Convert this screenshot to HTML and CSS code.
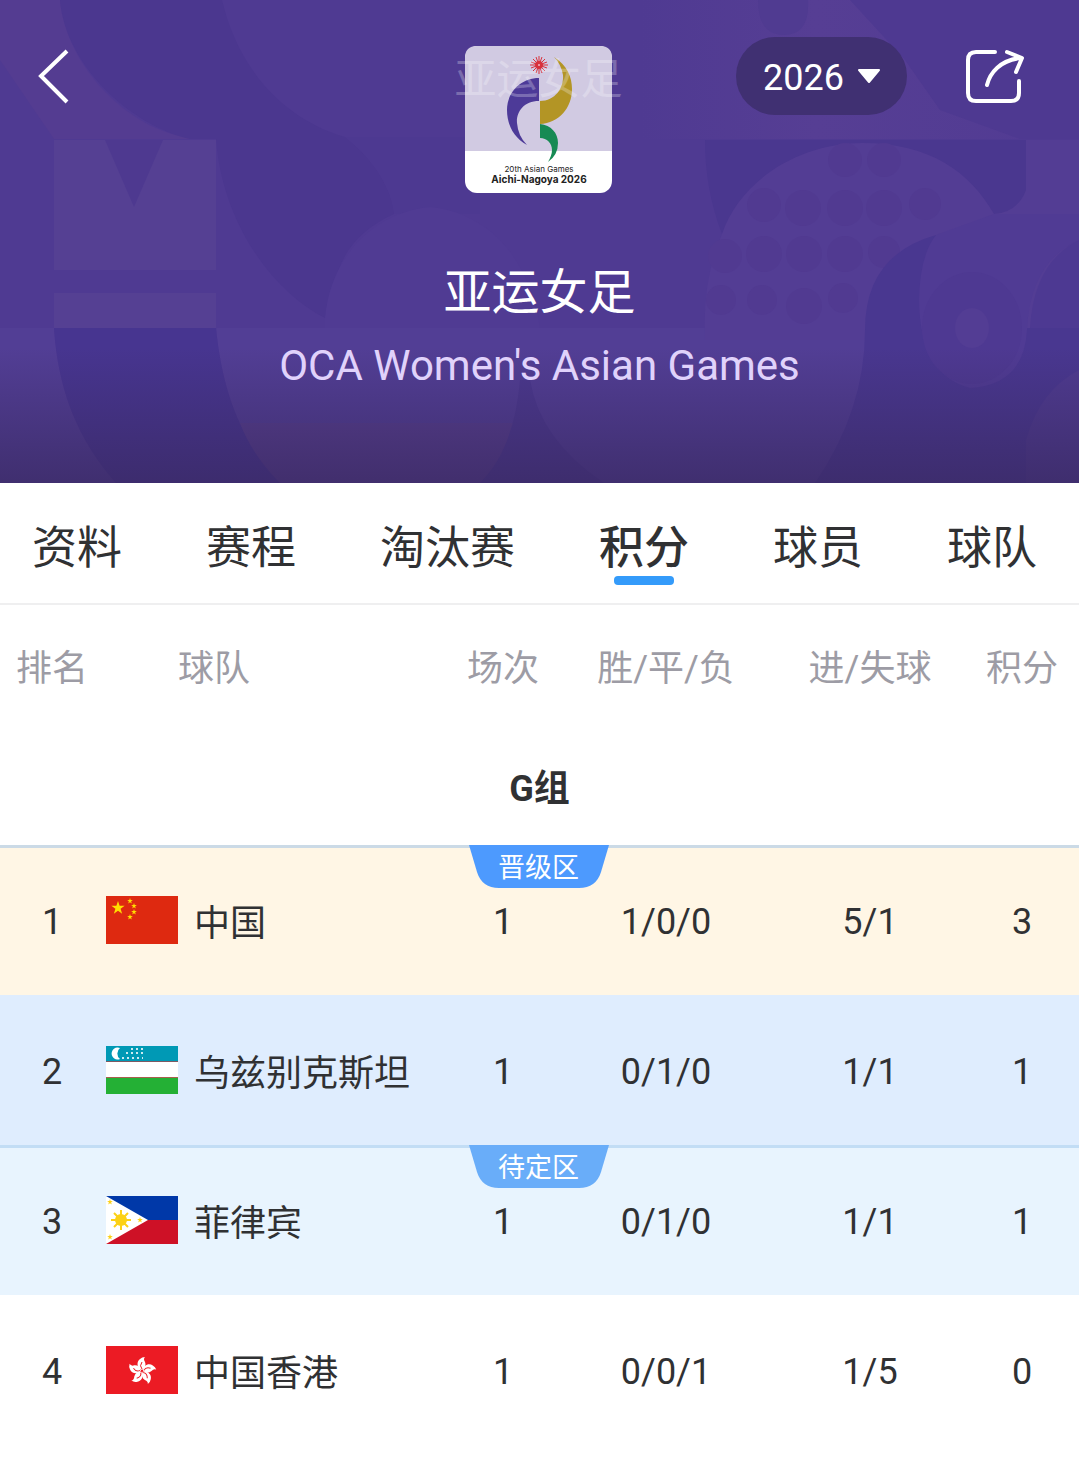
FILE: index.html
```html
<!DOCTYPE html>
<html lang="zh-CN">

<head>
    <meta charset="utf-8">
    <meta name="viewport" content="width=device-width, initial-scale=1">
    <title>亚运女足 - 积分</title>
    <link rel="stylesheet" href="styles.css">
</head>

<body>
    <!-- shared shapes -->
    <svg class="defs" aria-hidden="true">
        <symbol id="star" viewBox="-10 -10 20 20">
            <path d="M0-10 2.3-3.1 9.5-3.1 3.7 1.2 5.9 8.1 0 3.8-5.9 8.1-3.7 1.2-9.5-3.1-2.3-3.1z" />
        </symbol>
        <symbol id="zone" viewBox="0 0 140 43">
            <path d="M0 0H140L132 27Q127 43 110 43H30Q13 43 8 27z" />
        </symbol>
    </svg>

    <header class="hero">
        <svg class="hero_bg" viewBox="0 0 1079 483" preserveAspectRatio="none" aria-hidden="true">
            <defs>
                <linearGradient id="shade" x1="0" y1="0" x2="0" y2="1">
                    <stop offset="0.72" stop-color="#38285f" stop-opacity="0" />
                    <stop offset="1" stop-color="#38285f" stop-opacity="0.7" />
                </linearGradient>
                <linearGradient id="corner" x1="0" y1="0" x2="1" y2="0">
                    <stop offset="0" stop-color="#563e94" stop-opacity="0" />
                    <stop offset="0.4" stop-color="#563e94" />
                    <stop offset="1" stop-color="#513b93" />
                </linearGradient>
            </defs>
            <rect width="1079" height="483" fill="#4f3a92" />
            <path d="M0 0H60C66 66 130 135 200 139H54L0 60z" fill="#543c91" />
            <path d="M60 0H222C236 60 275 116 345 137C375 160 392 190 394 214Q350 234 338 272L325 318C270 290 222 220 216 139H190C130 125 66 66 60 0z" fill="#4b378f" />
            <path d="M345 137C375 160 392 190 394 214H480V137z" fill="#4d3991" />
            <path d="M325 318C330 260 370 213 430 207C490 213 530 260 540 328H325z" fill="#503b93" />
            <path d="M54 140H216V270H54zM54 293H216V328H54z" fill="#554093" />
            <path d="M105 140H163L134 207z" fill="#4e3990" />
            <path d="M0 328H54C58 390 78 440 116 483H0zM216 328H865V483H280C240 440 222 390 216 328z" fill="#523e95" />
            <path d="M54 328H216C222 390 240 440 280 483H116C78 440 58 390 54 328z" fill="#473590" />
            <path d="M240 423H514C508 448 496 468 480 483H280Q252 455 240 423z" fill="#573e8e" />
            <path d="M530 380Q540 440 604 483H480Q514 450 520 380z" fill="#4b388f" />
            <path d="M640 0H1000L1079 139H640z" fill="url(#corner)" />
            <path d="M758 0Q758 35 784 35T808 0z" fill="#503b91" />
            <path d="M850 0 905 60 940 110 1020 139H1079V0z" fill="#4e3991" />
            <path d="M705 140H1026V195Q1019 215 994 214L722 234Q705 190 705 140z" fill="#4a378f" />
            <path d="M722 234C740 180 800 143 862 143C930 143 970 172 994 214Q1018 212 1026 190V140H1079V340H705Q702 280 722 234z" fill="#533d94" />
            <g fill="#513a91">
                <circle cx="845" cy="160" r="17" />
                <circle cx="884" cy="160" r="17" />
                <circle cx="764" cy="205" r="17" />
                <circle cx="803" cy="208" r="18" />
                <circle cx="845" cy="208" r="18" />
                <circle cx="884" cy="208" r="18" />
                <circle cx="925" cy="204" r="16" />
                <circle cx="725" cy="256" r="17" />
                <circle cx="764" cy="254" r="18" />
                <circle cx="804" cy="254" r="18" />
                <circle cx="845" cy="254" r="18" />
                <circle cx="884" cy="252" r="16" />
                <circle cx="721" cy="300" r="15" />
                <circle cx="762" cy="300" r="15" />
                <circle cx="804" cy="306" r="18" />
                <circle cx="843" cy="298" r="15" />
            </g>
            <path d="M936 235Q865 255 865 330Q865 410 815 483H1079V328H1026V235z" fill="#493790" />
            <path d="M936 235 994 214H1079V240Q1030 262 1027 330Q1024 385 970 388Q920 375 919 300Q920 255 936 235z" fill="#503b94" />
            <path d="M1079 240Q1034 262 1030 328H1079z" fill="#4d3992" />
            <ellipse cx="972" cy="328" rx="50" ry="56" fill="#4e3992" />
            <ellipse cx="972" cy="328" rx="17" ry="20" fill="#533d94" />
            <path d="M1026 440Q1040 390 1079 370V483H1026z" fill="#4f3b91" />
            <rect width="1079" height="483" fill="url(#shade)" />
        </svg>

        <div class="bar">
            <button class="icon_btn" type="button" aria-label="返回">
                <svg width="34" height="58" viewBox="0 0 34 58" fill="none" stroke="#fff" stroke-width="4">
                    <path d="M31 3 5 28 31 54" />
                </svg>
            </button>

            <div class="emblem">
                <svg class="logo" viewBox="0 0 147 147" role="img" aria-label="20th Asian Games Aichi-Nagoya 2026">
                    <rect width="147" height="147" rx="12" fill="#fff" />
                    <path d="M0 105V12Q0 0 12 0H135Q147 0 147 12V105z" fill="#d1cae2" />
                    <path d="M74 32V55C58 55 51 67 52 77Q53 90 62 99C49 92 42 79 42 64C42 46 56 32 74 32z" fill="#4d3a98" />
                    <path d="M89 11C102 19 107 31 107 43C107 62 94 77 75 78V55C90 55 99 42 98 29Q96 18 89 11z" fill="#b39525" />
                    <path d="M75 78C86 79 93 87 93 97Q93 109 83 116Q87 109 87 104C87 97 82 92 75 92z" fill="#178a54" />
                    <path d="M74 19V10M74 19V28M74 19H65M74 19H83M74 19 68 13M74 19 80 25M74 19 80 13M74 19 68 25M74 19 71 11M74 19 77 27M74 19 77 11M74 19 71 27M74 19 66 16M74 19 82 22M74 19 82 16M74 19 66 22" stroke="#d8323c" />
                    <circle cx="74" cy="19" r="4" fill="#d8323c" />
                    <circle cx="74" cy="19" r="1" fill="#f3b8c2" />
                    <text class="logo_small" x="74" y="126">20th Asian Games</text>
                    <text class="logo_big" x="74" y="137">Aichi-Nagoya 2026</text>
                </svg>
                <span class="ghost" aria-hidden="true">亚运女足</span>
            </div>

            <div class="actions">
                <div class="year">
                    <select class="year_select" aria-label="赛季">
                        <option>2026</option>
                    </select>
                    <svg class="year_arrow" width="24" height="16" viewBox="0 0 24 16" fill="#fff" stroke="#fff" stroke-width="2" stroke-linejoin="round">
                        <path d="M2 2H22L12 14z" />
                    </svg>
                </div>
                <button class="icon_btn" type="button" aria-label="分享">
                    <svg width="60" height="56" viewBox="0 0 60 56" fill="none" stroke="#fff" stroke-width="4" stroke-linecap="round" stroke-linejoin="round">
                        <path d="M30 3H11Q3 3 3 11V44Q3 52 11 52H46Q54 52 54 44V32" />
                        <path d="M22 36C25 24 35 11 56 9M42 3 57 9 51 23" />
                    </svg>
                </button>
            </div>
        </div>

        <h1 class="title">亚运女足</h1>
        <p class="subtitle">OCA Women's Asian Games</p>
    </header>

    <nav class="tabs">
        <a class="tab" href="#info">资料</a>
        <a class="tab" href="#schedule">赛程</a>
        <a class="tab" href="#knockout">淘汰赛</a>
        <a class="tab active" href="#standings" aria-current="page">积分</a>
        <a class="tab" href="#players">球员</a>
        <a class="tab" href="#teams">球队</a>
    </nav>

    <main id="standings">
        <table class="standings">
            <colgroup>
                <col class="rank">
                <col class="team">
                <col class="played">
                <col class="record">
                <col class="goals">
                <col class="points">
            </colgroup>
            <thead>
                <tr>
                    <th scope="col">排名</th>
                    <th class="team_head" scope="col">球队</th>
                    <th scope="col">场次</th>
                    <th scope="col">胜/平/负</th>
                    <th scope="col">进/失球</th>
                    <th scope="col">积分</th>
                </tr>
            </thead>
            <tbody>
                <tr class="group">
                    <th colspan="6" scope="rowgroup">G组</th>
                </tr>
                <tr class="row first zone_start">
                    <td>1</td>
                    <td class="team_cell">
                        <div class="team_name">
                            <svg class="flag" viewBox="0 0 72 48" aria-hidden="true">
                                <rect width="72" height="48" fill="#de2910" />
                                <g fill="#ffde00">
                                    <use href="#star" x="5" y="5" width="14" height="14" />
                                    <use href="#star" x="21" y="2" width="6" height="6" />
                                    <use href="#star" x="25" y="7" width="6" height="6" />
                                    <use href="#star" x="25" y="13" width="6" height="6" />
                                    <use href="#star" x="21" y="18" width="6" height="6" />
                                </g>
                            </svg>
                            <span class="name">中国</span>
                        </div>
                        <div class="zone">
                            <svg class="zone_shape" aria-hidden="true"><use href="#zone" /></svg>
                            <span class="zone_text">晋级区</span>
                        </div>
                    </td>
                    <td>1</td>
                    <td>1/0/0</td>
                    <td>5/1</td>
                    <td>3</td>
                </tr>
                <tr class="row second">
                    <td>2</td>
                    <td class="team_cell">
                        <div class="team_name">
                            <svg class="flag" viewBox="0 0 72 48" aria-hidden="true">
                                <rect width="72" height="48" fill="#fff" />
                                <rect width="72" height="15" fill="#0099b5" />
                                <rect y="15" width="72" height="1" fill="#7d5a63" />
                                <rect y="31" width="72" height="1" fill="#a8604c" />
                                <rect y="32" width="72" height="16" fill="#24b035" />
                                <path d="M14 2A6 6 0 1 0 14 13A7 7 0 0 1 14 2z" fill="#fff" />
                                <path d="M25 3H37M20 7H37M16 12H37" stroke="#fff" stroke-width="2" stroke-dasharray="2 3" opacity="0.8" />
                            </svg>
                            <span class="name">乌兹别克斯坦</span>
                        </div>
                    </td>
                    <td>1</td>
                    <td>0/1/0</td>
                    <td>1/1</td>
                    <td>1</td>
                </tr>
                <tr class="row third zone_start">
                    <td>3</td>
                    <td class="team_cell">
                        <div class="team_name">
                            <svg class="flag" viewBox="0 0 72 48" aria-hidden="true">
                                <rect width="72" height="24" fill="#0038a8" />
                                <rect y="24" width="72" height="24" fill="#ce1126" />
                                <path d="M0 0 42 24 0 48z" fill="#fff" />
                                <g fill="#fcd116">
                                    <circle cx="15" cy="24" r="6" />
                                    <use href="#star" x="1" y="3" width="6" height="6" />
                                    <use href="#star" x="1" y="38" width="6" height="6" />
                                    <use href="#star" x="31" y="21" width="6" height="6" />
                                </g>
                                <path d="M15 14V34M5 24H25M8 17 22 31M22 17 8 31" stroke="#fcd116" stroke-width="2" />
                            </svg>
                            <span class="name">菲律宾</span>
                        </div>
                        <div class="zone">
                            <svg class="zone_shape" aria-hidden="true"><use href="#zone" /></svg>
                            <span class="zone_text">待定区</span>
                        </div>
                    </td>
                    <td>1</td>
                    <td>0/1/0</td>
                    <td>1/1</td>
                    <td>1</td>
                </tr>
                <tr class="row">
                    <td>4</td>
                    <td class="team_cell">
                        <div class="team_name">
                            <svg class="flag" viewBox="0 0 72 48" aria-hidden="true">
                                <defs>
                                    <g id="petal">
                                        <path d="M0-1C-5-3-6-9-2-12Q0-14 3-14Q1-12 3-9Q5-4 0-1z" fill="#fff" />
                                        <path d="M0-2Q-3-5 0-9" fill="none" stroke="#ec1b24" />
                                    </g>
                                </defs>
                                <rect width="72" height="48" fill="#ec1b24" />
                                <g transform="translate(36 25)">
                                    <use href="#petal" />
                                    <use href="#petal" transform="rotate(72)" />
                                    <use href="#petal" transform="rotate(144)" />
                                    <use href="#petal" transform="rotate(216)" />
                                    <use href="#petal" transform="rotate(288)" />
                                </g>
                            </svg>
                            <span class="name">中国香港</span>
                        </div>
                    </td>
                    <td>1</td>
                    <td>0/0/1</td>
                    <td>1/5</td>
                    <td>0</td>
                </tr>
            </tbody>
        </table>
    </main>
</body>

</html>
```

FILE: styles.css
```css
* {
    box-sizing: border-box;
}

body {
    margin: 0;
    background-color: #fff;
    color: #303133;
    font-family: Roboto, "Noto Sans CJK SC", sans-serif;
    font-size: 36px;
}

.defs {
    display: none;
}

/* header */
.hero {
    position: relative;
    padding: 37px 54px 90px 36px;
    color: #fff;
    text-align: center;
}

.hero_bg {
    position: absolute;
    top: 0;
    left: 0;
    z-index: -1;
    width: 100%;
    height: 100%;
}

.bar {
    display: grid;
    grid-template-columns: 1fr auto 1fr;
    align-items: start;
}

.icon_btn {
    display: flex;
    align-items: center;
    justify-self: start;
    height: 78px;
    padding: 2px 0 0;
    border: 0;
    background: none;
}

.emblem {
    position: relative;
    margin: 9px 0 0 16px;
}

.logo {
    display: block;
    width: 147px;
    height: 147px;
}

.logo_small,
.logo_big {
    font-family: Inter, sans-serif;
    font-size: 8px;
    text-anchor: middle;
    fill: #222;
}

.logo_big {
    font-size: 10px;
    font-weight: 700;
}

.ghost {
    position: absolute;
    top: 4px;
    left: 50%;
    font-size: 42px;
    line-height: 60px;
    white-space: nowrap;
    opacity: 0.25;
    transform: translateX(-50%);
}

.actions {
    display: flex;
    justify-content: flex-end;
    gap: 58px;
}

.year {
    position: relative;
}

.year_select {
    width: 171px;
    height: 78px;
    padding: 4px 0 0 27px;
    border: 0;
    border-radius: 39px;
    background-color: #403072;
    color: #fff;
    font: inherit;
    appearance: none;
}

.year_arrow {
    position: absolute;
    top: 31px;
    right: 26px;
    pointer-events: none;
}

.title {
    margin: 65px 0 0 18px;
    font-size: 48px;
    font-weight: 400;
    line-height: 70px;
}

.subtitle {
    margin: 10px 0 0 18px;
    color: #e0d2fb;
    font-size: 42px;
    line-height: 55px;
}

/* tabs */
.tabs {
    display: flex;
    justify-content: space-between;
    padding: 0 42px 0 32px;
    border-bottom: 2px solid #efeff0;
}

.tab {
    position: relative;
    padding: 34px 0 22px;
    color: inherit;
    font-size: 45px;
    line-height: 64px;
    text-decoration: none;
}

.tab.active {
    font-weight: 500;
}

.tab.active::after {
    content: "";
    position: absolute;
    bottom: 18px;
    left: 50%;
    width: 60px;
    height: 9px;
    margin-left: -30px;
    border-radius: 4px;
    background-color: #349bfa;
}

/* standings */
.standings {
    width: 100%;
    table-layout: fixed;
    border-collapse: collapse;
    text-align: center;
}

col.rank {
    width: 104px;
}

col.played {
    width: 108px;
}

col.record {
    width: 218px;
}

col.goals {
    width: 190px;
}

col.points {
    width: 114px;
}

.standings th,
.standings td {
    padding: 4px 0 0;
    line-height: 52px;
    white-space: nowrap;
}

.standings thead th {
    height: 124px;
    color: #9d9ca5;
    font-weight: 400;
}

.standings th.team_head {
    padding-left: 74px;
    text-align: left;
}

.group th {
    height: 116px;
    font-weight: 700;
}

.row {
    position: relative;
    height: 150px;
}

.row.first {
    background-color: #fff6e5;
}

.row.second {
    background-color: #dfedfe;
}

.row.third {
    background-color: #e8f4fe;
}

.zone_start td {
    box-shadow: inset 0 3px #c2ddf5;
}

.zone_start.first td {
    box-shadow: inset 0 3px #cbdae6;
}

.standings td.team_cell {
    padding-left: 2px;
}

.team_name {
    display: flex;
    align-items: center;
    gap: 16px;
}

.name {
    padding-top: 4px;
}

.flag {
    flex: none;
    width: 72px;
    height: 48px;
    margin-bottom: 4px;
}

.zone {
    position: absolute;
    top: 0;
    left: 50%;
    width: 140px;
    height: 43px;
    margin-left: -71px;
    color: #fff;
    font-size: 27px;
}

.zone_shape {
    position: absolute;
    top: 0;
    left: 0;
    width: 140px;
    height: 43px;
    fill: #4d9afe;
}

.third .zone_shape {
    fill: #69adf9;
}

.standings .zone_text {
    position: relative;
    display: block;
    line-height: 47px;
}
```
